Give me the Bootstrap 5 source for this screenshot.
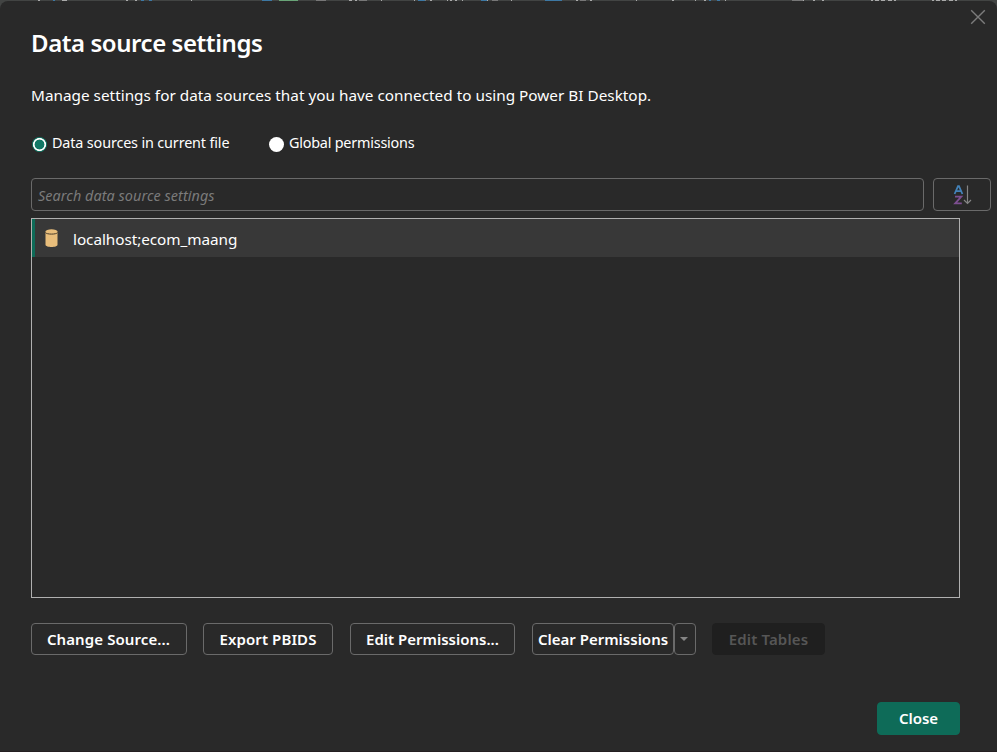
<!DOCTYPE html>
<html lang="en" data-bs-theme="dark">
<head>
<meta charset="utf-8">
<meta name="viewport" content="width=device-width, initial-scale=1">
<title>Data source settings</title>
<link href="https://cdn.jsdelivr.net/npm/bootstrap@5.3.0/dist/css/bootstrap.min.css" rel="stylesheet">
<style>
  body { background: #424443; color: #fff; font: 15.3px/20px "Noto Sans", "Open Sans", sans-serif; height: 752px; overflow: hidden; }
  .backdrop-strip { display: block; height: 1px; width: 997px; }
  .settings-dialog { background: #292929; height: 751px; border-radius: 8px 8px 0 0; padding: 26px 37px 16px 31px; border-bottom: 1px solid #241f21; }
  .dialog-close { position: absolute; top: 8px; right: 11px; line-height: 0; color: #7c7c7c; background: none; }
  .dialog-title { font-size: 24px; line-height: 32px; font-weight: 600; letter-spacing: -.44px; margin-bottom: 26px; }
  .dialog-desc { margin-bottom: 28px; height: 20px; letter-spacing: .015px; }
  .source-radio { width: 15px; height: 15px; border-radius: 50%; background: #fff; margin: 4px 5px 0 1px; border: 0; appearance: none; flex: none; }
  .source-radio:checked { background: radial-gradient(circle, #117865 0 4.7px, #fff 5.2px 6.2px, #117865 6.8px); }
  .radio-row { height: 20px; margin-bottom: 25px; font-size: 14.4px; letter-spacing: -.15px; }
  .scope-first { width: 237px; }
  .scope-second { letter-spacing: -.22px; }
  .search-row { width: 960px; height: 33px; margin-bottom: 7px; gap: 9px; }
  .search-box { width: 893px; padding: 2px 6px 0; font-size: 14.4px; letter-spacing: .06px; border: 1px solid #6a6a6a; border-radius: 4px; background: #292929; font-style: italic; color: #fff; }
  .search-box::placeholder { color: #7b7b7b; opacity: 1; }
  .sort-btn { width: 58px; border: 1px solid #6a6a6a; border-radius: 4px; padding: 0; }
  .source-list { height: 380px; border: 1px solid #b0b0b0; margin-bottom: 25px; }
  .source-item { height: 38px; background: #383838; border-left: 3px solid #0e6b58; padding-left: 10px; }
  .source-name { margin-left: 14px; margin-top: 2px; letter-spacing: -.05px; }
  .action-btn { height: 32px; padding: 0; border: 1px solid #6a6a6a; border-radius: 4px; background: #292929; color: #fff; font-size: 15px; line-height: 20px; font-weight: 600; white-space: nowrap; }
  .w-change { width: 156px; margin-right: 16px; padding-right: 1px; letter-spacing: .1px; }
  .w-export { width: 130px; margin-right: 17px; letter-spacing: .1px; }
  .w-edit { width: 165px; margin-right: 17px; }
  .w-clear { width: 142px; }
  .w-caret { width: 22px; margin-right: 16px; padding-right: 3px; line-height: 0; }
  .w-tables { width: 113px; letter-spacing: .15px; }
  .action-btn:disabled { background: #1f1f1f; border-color: #1f1f1f; color: #565656; opacity: 1; }
  .confirm-row { margin-top: 47px; }
  .confirm-btn { width: 83px; height: 33px; padding-bottom: 2px; background: #0e6b58; border-color: #0e6b58; }
</style>
</head>
<body>
<svg class="backdrop-strip" viewBox="0 0 997 1" shape-rendering="crispEdges" aria-hidden="true">
  <path d="M38 .5h2M62 .5h5M126 .5h2M135 .5h2M191 .5h1M349 .5h3M355 .5h2M381 .5h1M414 .5h1M430 .5h2M447 .5h1M450 .5h2M455 .5h2M462 .5h1M487 .5h1M511 .5h1M576 .5h2M590 .5h2M636 .5h1M672 .5h2M695 .5h1M704 .5h2M725 .5h1M803 .5h1M813 .5h2M822 .5h2M871 .5h2M875 .5h4M881 .5h4M888 .5h4M894 .5h2M932 .5h2M936 .5h4M942 .5h4M949 .5h4M955 .5h2" stroke="#aaa"/>
  <path d="M316 .5h10M359 .5h8M422 .5h4M492 .5h6M580 .5h6M792 .5h11" stroke="#777"/>
  <path d="M53 .5h2M141 .5h3M149 .5h3M262 .5h10M418 .5h7M481 .5h6M545 .5h17M709 .5h2M717 .5h3" stroke="#3d78a3"/>
  <path d="M279 .5h19" stroke="#69a477"/>
</svg>
<main class="settings-dialog position-relative">
  <button class="dialog-close border-0 p-0" type="button" aria-label="Close dialog">
    <svg width="16" height="16" viewBox="0 0 16 16" fill="none" stroke="currentColor" stroke-width="1.4"><path d="M1.2 1.2 14.8 14.8M14.8 1.2 1.2 14.8"/></svg>
  </button>
  <h1 class="dialog-title">Data source settings</h1>
  <p class="dialog-desc">Manage settings for data sources that you have connected to using Power BI Desktop.</p>
  <div class="radio-row d-flex">
    <label class="scope-first d-flex"><input class="source-radio" type="radio" name="scope" checked>Data sources in current file</label>
    <label class="scope-second d-flex"><input class="source-radio" type="radio" name="scope">Global permissions</label>
  </div>
  <div class="search-row d-flex">
    <input class="search-box" type="text" placeholder="Search data source settings">
    <button class="btn sort-btn d-flex align-items-center justify-content-center" type="button" aria-label="Sort">
      <svg width="20" height="20" viewBox="0 0 20 20" fill="none"><path d="M2.6 9 6 1.2h1L10.4 9M3.8 6.2h5.4" stroke="#4382b8" stroke-width="1.8"/><path d="M3 11.6h6.3L3.2 18.4h6.6" stroke="#7d4f91" stroke-width="1.8"/><path d="M15.5 .5v18M12 15 15.5 18.5 19 15" stroke="#858585" stroke-width="1.2"/></svg>
    </button>
  </div>
  <section class="source-list">
    <div class="source-item d-flex align-items-center">
      <svg width="14" height="20" viewBox="0 0 14 20"><path d="M.5 3.5v13.2c0 3 12 3 12 0V3.5z" fill="#e8bd7b"/><ellipse cx="6.5" cy="3.3" rx="6" ry="2" fill="#e8bd7b"/><path d="M.5 4.6c1 2 11 2 12 0" fill="none" stroke="#493c2a"/></svg>
      <span class="source-name">localhost;ecom_maang</span>
    </div>
  </section>
  <div class="d-flex">
    <button class="action-btn w-change" type="button">Change Source...</button>
    <button class="action-btn w-export" type="button">Export PBIDS</button>
    <button class="action-btn w-edit" type="button">Edit Permissions...</button>
    <button class="action-btn w-clear" type="button">Clear Permissions</button>
    <button class="action-btn w-caret" type="button" aria-label="More"><svg width="8" height="4" viewBox="0 0 8 4"><path d="M0 0h8L4 4z" fill="#858585"/></svg></button>
    <button class="action-btn w-tables" type="button" disabled>Edit Tables</button>
  </div>
  <div class="confirm-row d-flex justify-content-end">
    <button class="action-btn confirm-btn" type="button">Close</button>
  </div>
</main>
<script src="https://cdn.jsdelivr.net/npm/bootstrap@5.3.0/dist/js/bootstrap.bundle.min.js"></script>
</body>
</html>
